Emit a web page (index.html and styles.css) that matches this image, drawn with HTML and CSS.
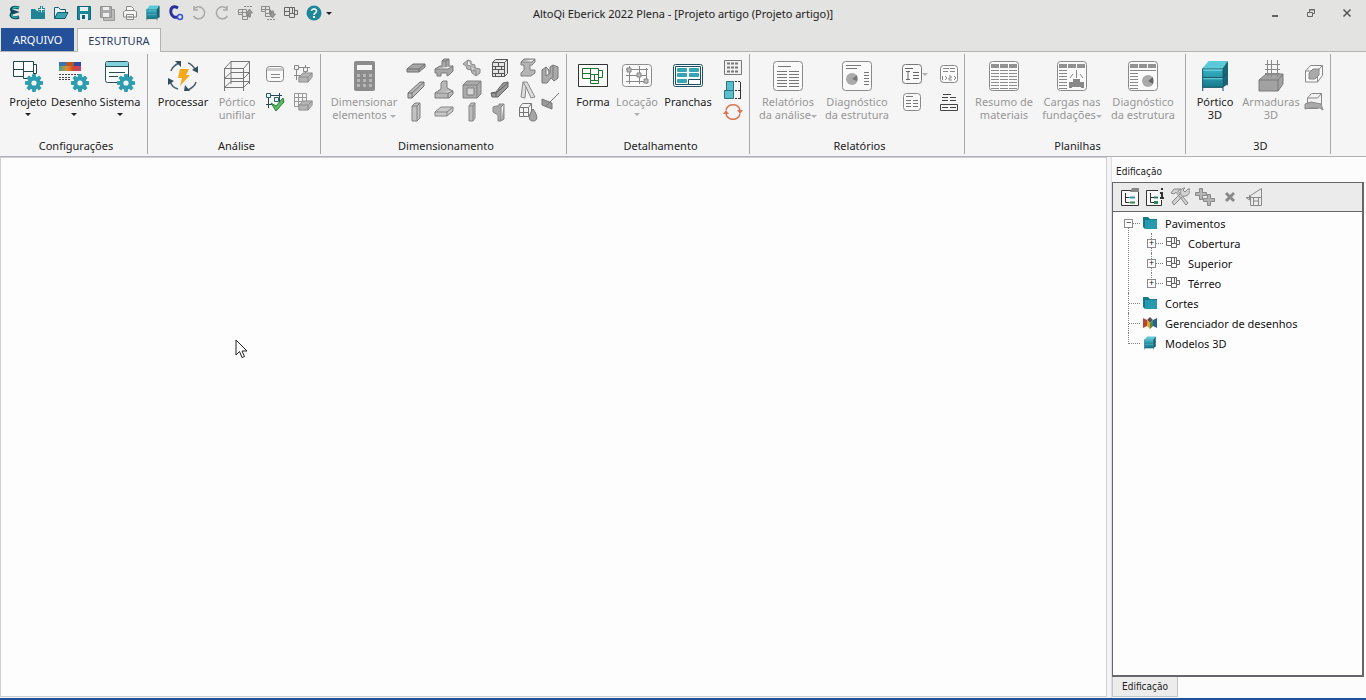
FILE: index.html
```html
<!DOCTYPE html>
<html lang="pt-BR">
<head>
<meta charset="utf-8">
<title>AltoQi Eberick 2022 Plena</title>
<link rel="stylesheet" href="styles.css">
</head>
<body>
<svg class="defs" aria-hidden="true">
  <defs>
    <linearGradient id="teal" x1="0" y1="0" x2="0" y2="1"><stop offset="0" stop-color="#35b5c6"/><stop offset="1" stop-color="#16788c"/></linearGradient>
    <linearGradient id="spectrum"><stop offset="0" stop-color="#35a58f"/><stop offset=".35" stop-color="#e0902c"/><stop offset=".65" stop-color="#cf4a33"/><stop offset="1" stop-color="#c2427a"/></linearGradient>
  </defs>
  <symbol id="gear" viewBox="0 0 18 18"><g fill="#2e9db0"><circle cx="9" cy="9" r="6.5"/><path d="M7.3 0h3.4l.6 4H6.700zM7.300 18h3.400l.6-4H6.700zM0 7.300v3.400l4 .6V6.700zM18 7.300v3.400l-4 .6V6.700zM1.500 4 4 1.500l3.200 2.400-3.300 3.300zM16.500 4 14 1.500l-3.200 2.400 3.300 3.300zM1.500 14 4 16.500l3.200-2.400-3.300-3.300zM16.500 14 14 16.500l-3.200-2.400 3.300-3.300z"/></g><circle cx="9" cy="9" r="2.600" fill="#f7f7f7"/></symbol>
  <symbol id="folder" viewBox="0 0 16 14"><path d="M1 1h5l2 2h7v10H3L1 11z" fill="#16788c"/><path d="M3 4h12v9H3z" fill="#2699ad"/></symbol>
  <symbol id="cabinet" viewBox="0 0 26 30"><path d="M1 8 7 1h18l-5 7z" fill="#5cc9d8"/><path d="M1 8h19v18H1z" fill="url(#teal)"/><path d="m20 8 5-7v21l-5 4z" fill="#14697c"/><path d="M1.500 8v21M1 8.500h19M1 16.500h19l5-5M1 25.500h19l5-4M20.500 8v21M24.500 2v22" fill="none" stroke="#1c5a6a"/><path d="M2 9.500h18M2 17.500h18" stroke="#7ad6e2"/></symbol>
  <symbol id="plan" viewBox="0 0 16 14"><path d="M1.500 1.500h10v10h-5v-2h-5zM6.500 1.500v8M1.500 5.500h5M6.500 7.500h5M9.500 1.500v6M11.500 4.500h3v4h-3" fill="none" stroke="#666"/></symbol>
  <symbol id="sheet" viewBox="0 0 32 32"><rect x="1.500" y="1.500" width="29" height="29" rx="3" fill="#fafafa" stroke="#8a8a8a"/></symbol>
  <symbol id="solid" viewBox="0 0 18 13"><path d="M1 6 6 1h11v5l-5 6H1z" fill="#b5b5b5" stroke="#858585"/><path d="M1 6h11l5-5M12 6v6" fill="none" stroke="#858585"/></symbol>
  <symbol id="tablehead" viewBox="0 0 32 32"><rect x="1.500" y="1.500" width="29" height="29" rx="3" fill="#fafafa" stroke="#8a8a8a"/><path d="M3 4h8v4H3zM12 4h8v4h-8zM21 4h8v4h-8z" fill="#929292"/></symbol>
</svg>

<div class="app">
  <header class="titlebar">
    <div class="quick">
      <button aria-label="Eberick"><svg viewBox="0 0 16 16"><path d="M12 3C7 1 3 3 5 6l3 1-3 1c-3 4 2 6 7 4" fill="none" stroke="#12485a" stroke-width="3"/><path d="M12 3C8 1 5 3 6 5M5 9c-1 3 2 4 6 3" fill="none" stroke="#25b1ad" stroke-width="1.500"/></svg></button>
      <button aria-label="Novo"><svg viewBox="0 0 16 16"><path d="M1 4h4l2 2h8v8H1z" fill="#1f8497"/><path d="M8 4h7v3H8z" fill="#45b9c8"/><path d="M11.500 1v7M8 4.500h7" stroke="#1f8497" stroke-width="3"/><path d="M11.500 1.500v6M8.500 4.500h6" stroke="#f4ffff"/></svg></button>
      <button aria-label="Abrir"><svg viewBox="0 0 16 16"><path d="M1.500 13.500v-11h4l2 2h5v3" fill="#e7f1f2" stroke="#155f70"/><path d="m1.500 13.500 3-6h10.500l-3 6z" fill="#39a3b2" stroke="#155f70"/></svg></button>
      <button aria-label="Salvar"><svg viewBox="0 0 16 16"><path d="M1.500 1.500h13v13h-13z" fill="#1d8799" stroke="#146274"/><path d="M4 2h8v4H4zM4 9h8v6H4z" fill="#e4f1f2"/><path d="M6 10h3v4H6z" fill="#155f70"/></svg></button>
      <button aria-label="Salvar tudo"><svg viewBox="0 0 16 16"><path d="M4.500 4.500h11v11h-11z" fill="#bbb" stroke="#999"/><path d="M1.500 1.500h11v11h-11z" fill="#aaa" stroke="#929292"/><path d="M4 2h6v3H4zM4 8h6v4H4z" fill="#eee"/></svg></button>
      <button aria-label="Imprimir"><svg viewBox="0 0 16 16" fill="#f5f5f5" stroke="#8a8a8a"><path d="M4.500 5V1.500h5l2 2V5M3 5.500h10l1.500 1.500v5h-13V7zM4.500 9.500h7v5h-7zM6 12h4"/></svg></button>
      <button aria-label="Pórtico 3D"><svg viewBox="0 0 26 30"><use href="#cabinet"/></svg></button>
      <button aria-label="Configurar"><svg viewBox="0 0 16 16"><path d="M10 3C5 0 2 3 3 8c1 4 4 5 7 4" fill="none" stroke="#2a2fa0" stroke-width="3"/><circle cx="12" cy="12" r="2.500" fill="#dfe7ff" stroke="#3e54cf" stroke-width="1.500"/></svg></button>
      <button aria-label="Desfazer"><svg viewBox="0 0 16 16" fill="none" stroke="#aaa" stroke-width="1.500"><path d="M3 4a6 6 0 1 1-.5 7M3 1v4h4"/></svg></button>
      <button aria-label="Refazer"><svg viewBox="0 0 16 16" fill="none" stroke="#aaa" stroke-width="1.500"><path d="M13 4a6 6 0 1 0 .5 7M13 1v4H9"/></svg></button>
      <button aria-label="Subir pavimento"><svg viewBox="0 0 16 16" fill="none" stroke="#8a8a8a"><path d="M1.500 4.500h8v7h-4v-2h-4zM5.500 4.500v5M1.500 7.500h8M5.500 11.500v3h5v-6"/><path d="M7 1.500h9" stroke-dasharray="2 1"/><path d="m12.500 4 3 4h-2v4h-2V8h-2z" fill="#999"/></svg></button>
      <button aria-label="Descer pavimento"><svg viewBox="0 0 16 16" fill="none" stroke="#8a8a8a"><path d="M1.500 1.500h8v7h-4v-2h-4zM5.500 1.500v5M1.500 4.500h8M5.500 8.500v3h5v-7"/><path d="M7 14.500h9" stroke-dasharray="2 1"/><path d="m12.500 13 3-4h-2V6h-2v3h-2z" fill="#999"/></svg></button>
      <button aria-label="Planta"><svg viewBox="0 0 16 14"><use href="#plan"/></svg></button>
      <button aria-label="Ajuda"><svg viewBox="0 0 16 16"><circle cx="8" cy="8" r="7.500" fill="#1f879a"/><path d="M5.500 6C6 3 11 3.500 10.500 6.500 10 8 8 8 8 10" fill="none" stroke="#fff" stroke-width="1.500"/><path d="M7 11h2v2H7z" fill="#fff"/></svg></button>
      <button class="more" aria-label="Mais"><i class="arrow"></i></button>
    </div>
    <h1>AltoQi Eberick 2022 Plena - [Projeto artigo (Projeto artigo)]</h1>
    <div class="window-buttons">
      <button aria-label="Minimizar"><svg viewBox="0 0 12 12"><path d="M3 9h6" stroke="#666" stroke-width="2"/></svg></button>
      <button aria-label="Restaurar"><svg viewBox="0 0 12 12" fill="none" stroke="#666"><path d="M2.500 5.500h5v4h-5zM4.500 5V2.500h5v4H8M4 3h6"/></svg></button>
      <button aria-label="Fechar"><svg viewBox="0 0 12 12"><path d="m2.500 2.500 7 7m0-7-7 7" stroke="#555" stroke-width="1.500"/></svg></button>
    </div>
  </header>

  <nav class="tabs">
    <button class="tab file">ARQUIVO</button>
    <button class="tab active">ESTRUTURA</button>
  </nav>

  <div class="ribbon">
    <section class="group config">
      <div class="tools">
        <button class="tool"><svg viewBox="0 0 32 32"><path d="M1.500 1.500h20v17h-10v-2h-10zM11.500 1.500v15M1.500 9.500h10M11.500 11.500h10M21.500 4.500h3v9h-3" fill="#fcfcfc" stroke="#23454e"/><use href="#gear" x="13" y="14" width="18" height="18"/></svg><span>Projeto</span><i class="arrow"></i></button>
        <button class="tool"><svg viewBox="0 0 32 32"><path d="M1 2h22v9H1z" fill="url(#spectrum)"/><path d="M1 2h7v4H1z" fill="#3b74a8"/><path d="M8 2h8v4H8z" fill="#b5562b"/><path d="M16 2h7v4h-7z" fill="#31489f"/><path d="M1 14.500h22M1 17.500h12M1 19.500h12" stroke="#444" stroke-dasharray="2 1"/><use href="#gear" x="13" y="14" width="18" height="18"/></svg><span>Desenho</span><i class="arrow"></i></button>
        <button class="tool"><svg viewBox="0 0 32 32"><rect x="1.500" y="1.500" width="23" height="21" rx="2" fill="#fbfdfd" stroke="#2b4b55"/><path d="M2 2h22v4H2z" fill="#80d1dd"/><path d="M2 6.500h22M5 12.500h16M5 16.500h9" stroke="#2b4b55"/><use href="#gear" x="13" y="14" width="18" height="18"/></svg><span>Sistema</span><i class="arrow"></i></button>
      </div>
      <h2>Configurações</h2>
    </section>

    <section class="group analysis">
      <div class="tools">
        <button class="tool"><svg viewBox="0 0 32 32"><g fill="none" stroke="#4c6370" stroke-width="1.500"><path d="M4 11c1-4 4-6 8-8M21 3c4 1 6 4 8 8M29 22c-1 4-4 6-8 8M11 29c-4-1-7-4-8-8"/></g><path d="M8 1h6v6zM31 6v7l-6-3zM23 31h-6l1-6zM1 25v-7l6 3z" fill="#35505c"/><path d="M13 9h9l-3 6h4L13 26l2-8h-4z" fill="#f5a818"/></svg><span>Processar</span></button>
        <button class="tool off"><svg viewBox="0 0 32 32" fill="none" stroke="#777"><path d="M3.500 8.500 10 1.500h18.500l-6 7zM3.500 8v23M22.500 8v23M10 1v23M28.500 1v23M3.500 18.500l6.500-6h18.500l-6 6zM3.500 27.500l6.500-6h18.500l-6 6z"/></svg><span>Pórtico<br>unifilar</span></button>
        <div class="mini-grid pairs">
          <button aria-label="Janela"><svg viewBox="0 0 20 20"><rect x="1.500" y="2.500" width="17" height="15" rx="3" fill="#fafafa" stroke="#888"/><path d="M2 4h16v3H2z" fill="#ccc"/><path d="M6 10.500h9M6 13.500h9" stroke="#888"/></svg></button>
          <button aria-label="Vínculos"><svg viewBox="0 0 20 20"><path d="M3.500 1v15M1 3.500h16M1 11.500h8M12.500 1v8" stroke="#888" fill="none"/><path d="M1.500 1.500h4v4h-4zM10.500 3.500h4v4h-4z" fill="#eee" stroke="#888"/><use href="#solid" x="5" y="8" width="15" height="11"/></svg></button>
          <button aria-label="Verificar"><svg viewBox="0 0 20 20"><path d="M3.500 1v15M1 3.500h16M1 12.500h8M14.500 1v10" stroke="#26475a" fill="none"/><path d="M1.500 1.500h4v4h-4zM9.500 5.500h4v4h-4z" fill="#e9f5f5" stroke="#26616b"/><path d="m6 11 5 3 7-8 1 4-8 9z" fill="#5bbc5f" stroke="#2d7e3b"/></svg></button>
          <button aria-label="Grelha"><svg viewBox="0 0 20 20"><path d="M1.500 1.500h12v13h-12zM1 5.500h13M1 9.500h13M5.500 1v13M9.500 1v13" stroke="#999" fill="none"/><use href="#solid" x="5" y="8" width="15" height="11"/></svg></button>
        </div>
      </div>
      <h2>Análise</h2>
    </section>

    <section class="group sizing">
      <div class="tools">
        <button class="tool off"><svg viewBox="0 0 32 32"><rect x="6" y="1" width="21" height="30" rx="2" fill="#8c8c8c"/><path d="M9 5h15v5H9z" fill="#f5f5f5"/><path d="M9 15.500h15M9 20.500h15M9 25.500h15" stroke="#b5b5b5" stroke-width="3" stroke-dasharray="3"/></svg><span>Dimensionar<br>elementos <i class="arrow"></i></span></button>
        <div class="mini-grid elements">
          <button aria-label="Lajes"><svg viewBox="0 0 20 20"><path d="M1 11 7 6h12v3l-6 5H1z" fill="#a5a5a5" stroke="#6e6e6e"/><path d="M1 11h12l6-5M13 11v3" stroke="#6e6e6e" fill="none"/></svg></button>
          <button aria-label="Blocos"><svg viewBox="0 0 20 20" fill="#a8a8a8" stroke="#7a7a7a"><path d="M1 11 6 8h2V3l2-2h5v7h4v5l-4 4-2 1v-3H7v3H3v-3H1zM1 11h13l5-3M8 3h4v6M12 3l3-2"/></svg></button>
          <button aria-label="Escadas"><svg viewBox="0 0 20 20" fill="#b8b8b8" stroke="#888"><path d="m1 6 5-4 3 1v3l4 1v3l5 1v4l-4 3-4-3-1-3-4-1-1-3zM6 2l-1 5 4 1v4l5 1v4"/></svg></button>
          <button aria-label="Alvenaria"><svg viewBox="0 0 20 20"><path d="M2.500 4.500h12v14h-12zM14.500 4.500l3-3v14l-3 3M2.500 4.500l3-3h12" fill="#e5e5e5" stroke="#555"/><path d="M2 8.500h13M2 11.500h13M2 15.500h13M8.500 5v3M5.500 9v3M11.500 9v3M8.500 12v3M5.500 16v3M11.500 16v3" stroke="#555"/></svg></button>
          <button aria-label="Perfis metálicos"><svg viewBox="0 0 20 20" fill="#b5b5b5" stroke="#808080"><path d="m3 4 3-3h11v3l-3 3h-2v5h5v3l-4 3H3v-3l3-3V7H3zM3 4h11l3-3"/></svg></button>
          <button aria-label="Vigas"><svg viewBox="0 0 20 20" fill="#bbb" stroke="#707070"><path d="m2 13 12-11h4v4L6 18H2zM2 13h4v5M6 13 18 2"/></svg></button>
          <button aria-label="Sapatas"><svg viewBox="0 0 20 20" fill="#b8b8b8" stroke="#7a7a7a"><path d="m1 13 6-4V3l2-2h4v7l6 3v3l-4 4H1zM1 13h13l5-2M14 13v5"/></svg></button>
          <button aria-label="Reservatórios"><svg viewBox="0 0 20 20" fill="#aaa" stroke="#808080"><path d="M1 5 5 1h14v13l-4 4H1zM1 5h14v13M15 5l4-4"/><path d="M5 8h7v7H5z" fill="#d5d5d5"/></svg></button>
          <button aria-label="Vigas inclinadas"><svg viewBox="0 0 20 20" fill="#999" stroke="#666"><path d="m1 13 5-1 7-9 5-1v5L8 17H2zM1 13h5v4M6 13 18 3"/></svg></button>
          <button aria-label="Treliças"><svg viewBox="0 0 20 20" fill="#ddd" stroke="#888"><path d="m3 17 2-15h4l8 15-4 1L8 7l-1 11zM5 2l3 5"/></svg></button>
          <button aria-label="Pilares"><svg viewBox="0 0 20 20" fill="#c2c2c2" stroke="#808080"><path d="m6 4 3-3h5v15l-3 3H6zM6 4h5v15M11 4l3-3"/></svg></button>
          <button aria-label="Radier"><svg viewBox="0 0 20 20" fill="#c9c9c9" stroke="#858585"><path d="m1 10 6-5h12v4l-6 5H1zM1 10h12v4M13 10l6-5"/></svg></button>
          <button aria-label="Pilar-parede"><svg viewBox="0 0 20 20" fill="#bbb" stroke="#888"><path d="m7 4 2-3h4v15l-2 3H7zM7 4h4v15M11 4l2-3"/></svg></button>
          <button aria-label="Consoles"><svg viewBox="0 0 20 20" fill="#aaa" stroke="#888"><path d="M9 4V2h5v15l-3 2H8v-6l-5-3V5l3-1zM14 2l-3 3v14"/></svg></button>
          <button aria-label="Reservatório"><svg viewBox="0 0 20 20" fill="none" stroke="#777"><path d="M1.500 5.500l3-4h9v9l-3 4h-9zM1.500 5.500h9v9M10.500 5.500l3-4M1.500 10.500h9M5.500 5v9"/><path d="M15 7c6 8 4 12 0 12s-6-4 0-12" fill="#a5a5a5"/></svg></button>
        </div>
        <div class="mini-grid side">
          <button aria-label="Paredes"><svg viewBox="0 0 20 20" fill="#aaa" stroke="#777"><path d="m2 6 4-3v9l4-3V3l3-2 5 2v11l-4 3-3-3-4 5H2zM6 3l3 3v4M13 2v12"/></svg></button>
          <button aria-label="Corte"><svg viewBox="0 0 20 20" fill="#999" stroke="#777"><path d="m2 7 10 4v6L2 13zM6 14 19 1"/></svg></button>
        </div>
      </div>
      <h2>Dimensionamento</h2>
    </section>

    <section class="group detail">
      <div class="tools">
        <button class="tool"><svg viewBox="0 0 32 32"><path d="M1.500 4.500h29v22h-29z" fill="#fcfcfc" stroke="#333"/><path d="M5.500 8.500h16v12h-8v-2h-8zM13.500 8.500v10M5.500 13.500h8M13.500 14.500h8M17.500 14.500v6M21.500 10.500h4v7h-4M13.500 20.500v3h8v-3" fill="none" stroke="#1c7330"/></svg><span>Forma</span></button>
        <button class="tool off"><svg viewBox="0 0 32 32"><rect x="1.500" y="4.500" width="29" height="22" rx="3" fill="#fafafa" stroke="#8c8c8c"/><path d="M8.500 6v18M18.500 6v18M25.500 8v16M5 9.500h22M5 15.500h21M5 21.500h21" stroke="#888"/><path d="M6 8h4v4H6zM16 13h4v4h-4zM23 19h4v4h-4z" fill="#bbb" stroke="#888"/></svg><span>Locação</span><i class="arrow"></i></button>
        <button class="tool"><svg viewBox="0 0 32 32"><rect x="1.500" y="4.500" width="29" height="22" rx="2" fill="#f4fbfc" stroke="#245161"/><path d="M3.500 6.500h25v18h-25z" fill="none" stroke="#245161"/><rect x="5" y="8" width="10" height="4" rx="1" fill="#38a3b2"/><rect x="17" y="8" width="10" height="4" rx="1" fill="#38a3b2"/><rect x="5" y="13" width="10" height="4" rx="1" fill="#38a3b2"/><rect x="17" y="13" width="10" height="4" rx="1" fill="#38a3b2"/><rect x="5" y="19" width="10" height="4" rx="1" fill="#38a3b2"/><path d="M16.500 19.500h12v5h-12z" fill="#fff" stroke="#245161"/></svg><span>Pranchas</span></button>
        <div class="mini-grid stack">
          <button aria-label="Armaduras"><svg viewBox="0 0 20 20" fill="none" stroke="#777"><path d="M1.500 2.500h17v14h-17z" fill="#f2f2f2"/><path d="M4 5.500h12M4 9.500h12M4 13.500h12" stroke-width="2" stroke-dasharray="3 1"/></svg></button>
          <button aria-label="Cotas"><svg viewBox="0 0 20 20"><path d="M3.500 1.500h7v9h-7zM1.500 10.500h9v8h-9z" fill="#59bfcc" stroke="#2d7380"/><path d="M12 1.500h6M12 10.500h6M12 18.500h6" stroke="#333" stroke-dasharray="2 1"/><path d="M17.500 2v17" stroke="#333"/></svg></button>
          <button aria-label="Atualizar"><svg viewBox="0 0 20 20"><path d="M3 8c2-7 12-7 14 0M17 12c-2 7-12 7-14 0" fill="none" stroke="#dc7651" stroke-width="1.500"/><path d="M14 8h6l-3 4zM0 12h6L3 8z" fill="#dc7651"/></svg></button>
        </div>
      </div>
      <h2>Detalhamento</h2>
    </section>

    <section class="group reports">
      <div class="tools">
        <button class="tool off"><svg viewBox="0 0 32 32"><use href="#sheet"/><path d="M6 6.500h13M5 11.500h10M17 11.500h10M5 14.500h10M17 14.500h10M5 17.500h10M17 17.500h10M5 20.500h10M17 20.500h10M5 23.500h10M17 23.500h10M5 26.500h10M17 26.500h10" stroke="#777"/></svg><span>Relatórios<br>da análise<i class="arrow"></i></span></button>
        <button class="tool off"><svg viewBox="0 0 32 32"><use href="#sheet"/><path d="M5 5.500h15M5 8.500h11M23 12.500h5M23 15.500h5M23 18.500h5M23 21.500h5M23 24.500h5" stroke="#777"/><circle cx="11" cy="19" r="6" fill="#aaa"/><path d="m11 19 5-4v6z" fill="#777"/></svg><span>Diagnóstico<br>da estrutura</span></button>
        <div class="mini-grid report-list">
          <button aria-label="Relatório de texto"><svg viewBox="0 0 20 20"><rect x=".5" y=".5" width="19" height="19" rx="3" fill="#fafafa" stroke="#777"/><path d="M3 4.500h8M4 7.500h4M6 8v8M4 15.500h4M11 8.500h6M11 11.500h6M11 14.500h6" stroke="#666"/></svg><i class="arrow"></i></button>
          <button aria-label="Relatório numérico"><svg viewBox="0 0 20 20"><rect x="1.500" y="1.500" width="17" height="17" rx="3" fill="#fafafa" stroke="#888"/><path d="M4 4.500h6M4 7.500h5M11 4.500h5M11 7.500h5M3.500 12v4M6 12l2 2-2 2M10 12h2v2h-2v2h3M15 12l2 2-2 2" stroke="#888" fill="none"/></svg></button>
          <button aria-label="Relatório em colunas"><svg viewBox="0 0 20 20"><rect x="1.500" y="1.500" width="17" height="17" rx="3" fill="#fafafa" stroke="#888"/><path d="M4 4.500h7M4 8.500h5M11 8.500h5M4 11.500h5M11 11.500h5M4 14.500h5M11 14.500h5" stroke="#777"/></svg></button>
          <button aria-label="Relatório resumido"><svg viewBox="0 0 20 20" fill="none" stroke="#444"><path d="M4 2.500h8M3 5.500h6M11 5.500h6M3 8.500h6M11 8.500h6M1.500 12.500h17v6h-17zM3 15.500h6M11 15.500h6"/></svg></button>
        </div>
      </div>
      <h2>Relatórios</h2>
    </section>

    <section class="group sheets">
      <div class="tools">
        <button class="tool off"><svg viewBox="0 0 32 32"><use href="#tablehead"/><path d="M3 10.500h26M3 13.500h26M3 16.500h26M3 19.500h26M3 22.500h26M3 25.500h26M3 28.500h26" stroke="#8c8c8c" stroke-dasharray="8 1"/></svg><span>Resumo de<br>materiais</span></button>
        <button class="tool off"><svg viewBox="0 0 32 32"><use href="#tablehead"/><path d="M3 10.500h8M3 13.500h8M3 16.500h8M3 19.500h8M3 22.500h8M3 25.500h8M3 28.500h8M20.500 10v8M14 18l3-4M27 18l-3-4" stroke="#888"/><path d="M17 19h7v3h4v6h-3v-1h-9v1h-3v-6h4z" fill="#888"/></svg><span>Cargas nas<br>fundações<i class="arrow"></i></span></button>
        <button class="tool off"><svg viewBox="0 0 32 32"><use href="#tablehead"/><path d="M3 10.500h26M3 13.500h8M3 16.500h8M3 19.500h8M3 22.500h8M3 25.500h8M3 28.500h8" stroke="#888"/><circle cx="21" cy="21" r="6" fill="#aaa"/><path d="m21 21 5-4v7z" fill="#666"/></svg><span>Diagnóstico<br>da estrutura</span></button>
      </div>
      <h2>Planilhas</h2>
    </section>

    <section class="group view3d">
      <div class="tools">
        <button class="tool"><svg viewBox="0 0 26 30"><use href="#cabinet"/></svg><span>Pórtico<br>3D</span></button>
        <button class="tool off"><svg viewBox="0 0 32 32"><path d="m4 20 7-6h17v10l-5 7H4z" fill="#a2a2a2" stroke="#7a7a7a"/><path d="M4 20h19v11M23 20l5-6" fill="none" stroke="#7a7a7a"/><path d="M12.500 0v17M16.500 0v17M22.500 0v17M10 4.500h15M10 9.500h15M10 13.500h15" stroke="#888"/></svg><span>Armaduras<br>3D</span></button>
        <div class="mini-grid side">
          <button aria-label="Vista 3D"><svg viewBox="0 0 20 20" fill="#fafafa" stroke="#888"><path d="m1.500 7 5-5.500h12v10l-5 6.500h-12zM1.500 7h12v11M13.500 7l5-5.500"/><path d="m5 9 4-4h6v6l-4 4H5z" fill="#aaa"/></svg></button>
          <button aria-label="Imagem 3D"><svg viewBox="0 0 20 20" fill="#f2f2f2" stroke="#888"><path d="m3.500 6 4-4.500h10v11l-4 4h-10zM3.500 6h10M13.500 6l4-4.500"/><path d="M1 17v-5l6-2 10 2 2 6-3-2H6z" fill="#aaa"/></svg></button>
        </div>
      </div>
      <h2>3D</h2>
    </section>
  </div>

  <div class="workspace">
    <main class="canvas">
      <svg class="cursor" viewBox="0 0 13 20"><path d="M1 1v15l3.500-3.500L7 18.500l2.500-1L7 12h5z" fill="#fff" stroke="#222"/></svg>
    </main>
    <aside class="dock">
      <h2>Edificação</h2>
      <div class="panel">
        <div class="panel-tools">
          <button aria-label="Edificação"><svg viewBox="0 0 20 20"><path d="M1.500 3.500h17v15h-17z" fill="#f8f8f8" stroke="#333"/><path d="M10 5l2-4h7v4z" fill="#888"/><path d="M5.500 6v9.500h4M5.500 10.500h4" fill="none" stroke="#333"/><path d="M10 10.500h5" stroke="#2d9ab0" stroke-width="2"/><path d="M10 15.500h5" stroke="#2e8a4e" stroke-width="2"/></svg></button>
          <button aria-label="Informações"><svg viewBox="0 0 20 20"><path d="M13 3.500H1.500v15h15V13" fill="#f8f8f8" stroke="#333"/><path d="M5.500 6v9.500h4M5.500 10.500h4" fill="none" stroke="#333"/><path d="M9 9.500h4v2H9zM9 14h4v3H9z" fill="#24865a"/><path d="M16 1h2v2h-2zM15 5h3v5h1v2h-4v-2h1V7h-1z" fill="#333"/></svg></button>
          <button aria-label="Ferramentas"><svg viewBox="0 0 20 20" fill="#d2d2d2" stroke="#888"><path d="M4 2 1 6l3 1 2-2 10 13 2-2L8 4l3-2zM18 2l-3 3-2-2 2-2c-4 0-5 3-4 5l-9 9 2 3 9-9c4 1 7-2 7-7z"/></svg></button>
          <button aria-label="Adicionar"><svg viewBox="0 0 20 20" fill="#b5b5b5" stroke="#888"><path d="M4.500 1.500h3v4h4v3h-4v4h-3v-4h-4v-3h4zM12.500 7.500h3v4h4v3h-4v4h-3v-4h-4v-3h4z"/></svg></button>
          <button aria-label="Excluir"><svg viewBox="0 0 20 20"><path d="m6 6 8 8m0-8-8 8" stroke="#8a8a8a" stroke-width="3"/></svg></button>
          <button aria-label="Corte"><svg viewBox="0 0 20 20" fill="none" stroke="#8a8a8a"><path d="M5.500 8.500 16.500 1.500v17h-11zM1 10.500h15M4.500 8v5L1 10.500M8.500 11v3h5v-3M8.500 18v-4M13.500 18v-4"/></svg></button>
        </div>
        <ul class="tree">
          <li class="open"><div class="row"><button class="toggle" aria-label="Recolher">−</button><svg viewBox="0 0 16 14"><use href="#folder"/></svg><span>Pavimentos</span></div>
            <ul>
              <li><div class="row"><button class="toggle" aria-label="Expandir">+</button><svg viewBox="0 0 16 14"><use href="#plan"/></svg><span>Cobertura</span></div></li>
              <li><div class="row"><button class="toggle" aria-label="Expandir">+</button><svg viewBox="0 0 16 14"><use href="#plan"/></svg><span>Superior</span></div></li>
              <li><div class="row"><button class="toggle" aria-label="Expandir">+</button><svg viewBox="0 0 16 14"><use href="#plan"/></svg><span>Térreo</span></div></li>
            </ul>
          </li>
          <li><div class="row leaf"><svg viewBox="0 0 16 14"><use href="#folder"/></svg><span>Cortes</span></div></li>
          <li><div class="row leaf"><svg viewBox="0 0 16 14"><path d="m1 2 4 2v6l-4 2z" fill="#b94632"/><path d="m5 4 3-3 3 3-3 3z" fill="#5a534d"/><path d="m5 4 3 3v6l-3-3z" fill="#e2a52c"/><path d="m8 7 3-3v6l-3 3z" fill="#4d8a45"/><path d="m11 4 4-2v10l-4-2z" fill="#28638e"/></svg><span>Gerenciador de desenhos</span></div></li>
          <li><div class="row leaf"><svg viewBox="0 0 26 30"><use href="#cabinet"/></svg><span>Modelos 3D</span></div></li>
        </ul>
      </div>
      <button class="dock-tab">Edificação</button>
    </aside>
  </div>
  <footer class="status"></footer>
</div>
</body>
</html>
```
FILE: styles.css
```css
* { box-sizing: border-box; }

body {
  margin: 0;
  font: 11px/13px "Noto Sans", "Open Sans", sans-serif;
  color: #222;
}

button {
  margin: 0;
  padding: 0;
  border: 0;
  background: none;
  font: inherit;
  color: inherit;
}

h1, h2 { margin: 0; font-size: 11px; font-weight: 400; }
svg { display: block; flex: none; }
.defs { position: absolute; width: 0; height: 0; }

.arrow {
  display: inline-block;
  border: 3px solid transparent;
  border-top-color: currentColor;
  border-bottom: 0;
}

.app {
  display: flex;
  flex-direction: column;
  height: 100vh;
  background: #f5f5f5;
}

/* Title bar */
.titlebar {
  display: grid;
  grid-template-columns: 1fr auto 1fr;
  align-items: center;
  height: 28px;
  padding-bottom: 2px;
  background: #e3e3e1;
}
.quick { display: flex; align-items: center; padding-left: 3px; }
.quick button { display: grid; place-items: center; width: 23px; height: 26px; }
.quick svg { width: 16px; height: 16px; }
.quick .more { width: 8px; }
.titlebar h1 { white-space: nowrap; }
.window-buttons { display: flex; justify-content: flex-end; padding-right: 1px; }
.window-buttons button { display: grid; place-items: center; width: 36px; height: 24px; }
.window-buttons svg { width: 12px; height: 12px; }

/* Tabs */
.tabs {
  display: flex;
  gap: 3px;
  height: 24px;
  padding-left: 1px;
  background: #e3e3e1;
  border-bottom: 1px solid #b4b4b4;
}
.tab { height: 23px; padding: 0 12px; }
.tab.file { background: #24509a; color: #fff; }
.tab.active {
  height: 24px;
  padding: 0 10px;
  background: #f9f9f9;
  border: 1px solid #b4b4b4;
  border-bottom: 0;
  color: #2b3a63;
}

/* Ribbon */
.ribbon {
  display: flex;
  height: 105px;
  padding: 2px 0;
  background: #f5f5f5;
  border-bottom: 1px solid #b0b0b4;
}
.group {
  display: flex;
  flex-direction: column;
  justify-content: space-between;
  padding: 6px 0 2px 5px;
  border-right: 1px solid #a8a8ac;
}
.group h2 { text-align: center; }
.tools { display: grid; align-items: start; }
.config { width: 148px; }
.config .tools { grid-template-columns: repeat(3, 46px); }
.analysis { width: 173px; }
.analysis .tools { grid-template-columns: 60px 48px 56px; }
.sizing { width: 246px; }
.sizing .tools { grid-template-columns: 76px 140px 16px; }
.detail { width: 183px; }
.detail .tools { grid-template-columns: 42px 46px 56px 34px; }
.reports { width: 215px; }
.reports .tools { grid-template-columns: 66px 72px 74px; }
.sheets { width: 221px; }
.sheets .tools { grid-template-columns: 68px 68px 74px; }
.view3d { width: 145px; }
.view3d .tools { grid-template-columns: 48px 64px 22px; }

.tool {
  display: flex;
  flex-direction: column;
  align-items: center;
  white-space: nowrap;
}
.tool svg { width: 32px; height: 32px; margin-bottom: 3px; }
.tool > .arrow { margin-top: 5px; }
.off { color: #979797; }
.off .arrow { color: #b0b0b0; vertical-align: middle; }

.mini-grid { display: grid; justify-items: center; }
.mini-grid button { display: flex; align-items: center; }
.mini-grid svg { width: 20px; height: 20px; }
.pairs { grid-template: repeat(2, 28px) / 1fr 1fr; }
.elements { grid-template: repeat(3, 22px) / repeat(5, 28px); }
.elements, .stack { margin-top: -3px; }
.side { grid-template: repeat(2, 28px) / 100%; }
.stack { grid-template-rows: repeat(3, 22px); }
.report-list { grid-template: repeat(2, 28px) / 1fr 1fr; }
.report-list .arrow { width: 0; margin-right: -6px; color: #b0b0b0; }

/* Workspace */
.workspace {
  display: flex;
  flex: 1;
  gap: 4px;
  min-height: 0;
  background: #f4f4f6;
}
.canvas {
  position: relative;
  flex: 1;
  margin-bottom: 1px;
  background: #fdfdfd;
  border: 1px solid #d0d0d4;
}
.cursor { position: absolute; left: 234px; top: 181px; width: 13px; height: 20px; }

.dock {
  display: flex;
  flex-direction: column;
  width: 255px;
  padding-right: 2px;
  background: #fcfcfc;
  border-left: 1px solid #dcdce0;
}
.dock h2 { padding: 8px 4px 4px; }
.dock h2, .dock-tab { font-family: "DejaVu Sans Condensed", "DejaVu Sans", sans-serif; font-size: 10px; }
.panel {
  display: flex;
  flex: 1;
  flex-direction: column;
  background: #fdfdfd;
  border: 1px solid #66666a;
  border-width: 1px 2px 2px 1px;
}
.panel-tools {
  display: flex;
  gap: 5px;
  padding: 4px 7px;
  background: #ebebeb;
  border-bottom: 1px solid #66666a;
}
.panel-tools svg { width: 20px; height: 20px; }
.tree, .tree ul { margin: 0; padding: 0; list-style: none; }
.tree { padding: 1px 0 0 11px; color: #111; }
.tree ul { padding-left: 23px; }
.tree li { position: relative; }
.tree li::before {
  content: "";
  position: absolute;
  left: 4px;
  top: 0;
  bottom: 0;
  border-left: 1px dotted #808080;
}
.tree > li:first-child::before { top: 10px; }
.tree > li:last-child::before { bottom: 9px; }
.tree ul li:last-child::before { bottom: 9px; }
.row { display: flex; align-items: center; height: 20px; }
.row::before { content: ""; order: 1; width: 7px; margin-right: 2px; border-top: 1px dotted #808080; }
.row svg { order: 2; width: 16px; height: 14px; margin-right: 7px; }
.row span { order: 3; }
.row.leaf { padding-left: 5px; }
.row.leaf::before { width: 11px; }
.toggle {
  position: relative;
  width: 9px;
  height: 9px;
  background: #fff;
  border: 1px solid #8c8c90;
  font-size: 9px;
  line-height: 6px;
}
.dock-tab {
  align-self: flex-start;
  height: 20px;
  margin-bottom: 1px;
  padding: 0 9px;
  background: #ececec;
  border: 1px solid #c4c4c8;
  border-top: 0;
}
.status { height: 2px; background: #24509a; }
```
